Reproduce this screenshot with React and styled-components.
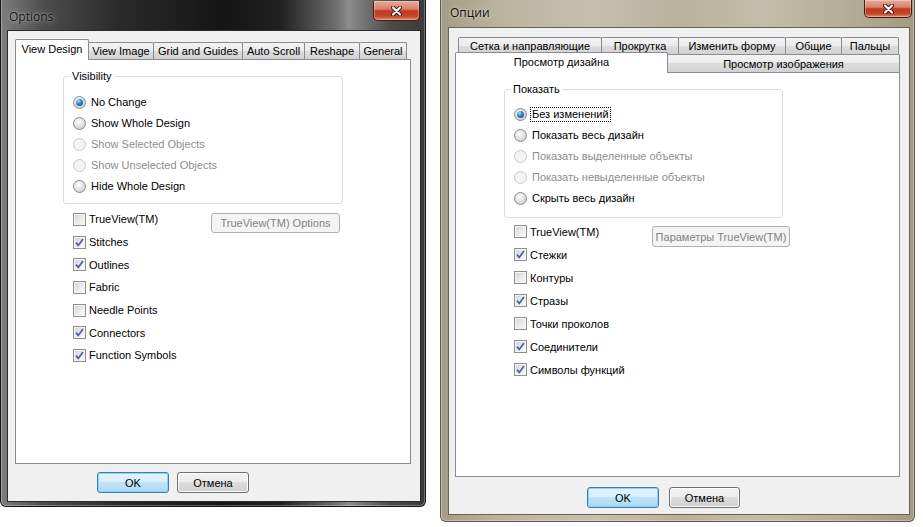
import styled, { createGlobalStyle } from "styled-components"

const GlobalStyle = createGlobalStyle`
  html, body { margin: 0; padding: 0; background: #ffffff; }
  body {
    font-family: "Liberation Sans", Arial, sans-serif;
    font-size: 11px;
    color: #000;
  }
`

const Screen = styled.div`
  display: flex;
  align-items: flex-start;
  gap: 14px;
  width: 923px;
  height: 527px;
  overflow: hidden;
  background: #fff;
`

const Frame = styled.div`
  box-sizing: border-box;
  width: ${p => p.$w}px;
  height: ${p => p.$h}px;
  display: flex;
  flex-direction: column;
  padding: 0 ${p => p.$pr}px ${p => p.$pb}px ${p => p.$pl}px;
  background: ${p => p.$bg};
  border: 1px solid ${p => p.$edge};
  border-top: none;
  border-radius: 0 0 6px 6px;
  box-shadow: inset 1px 0 0 rgba(255,255,255,.3), inset -1px 0 0 rgba(255,255,255,.3), inset 0 -1px 0 rgba(255,255,255,.3);
`

const TitleBar = styled.div`
  height: ${p => p.$h}px;
  flex-shrink: 0;
  display: flex;
  justify-content: space-between;
  align-items: flex-start;
`

const Title = styled.span`
  font-family: "Open Sans", "Liberation Sans", sans-serif;
  font-size: 12px;
  line-height: 14px;
  color: #111;
  margin: ${p => p.$top}px 0 0 2px;
  text-shadow: 0 0 6px rgba(255,255,255,.55), 0 0 2px rgba(255,255,255,.4);
`

const CloseButton = styled.div`
  box-sizing: border-box;
  width: ${p => p.$w}px;
  height: ${p => p.$h}px;
  margin: ${p => p.$top}px ${p => p.$right}px 0 0;
  border: 1px solid #4a1a12;
  border-top: none;
  border-radius: 0 0 5px 5px;
  background: linear-gradient(#e8ab9c 0%, #d8806a 42%, #c13b20 52%, #c4462a 80%, #dd8a6c 100%);
  box-shadow: inset 0 0 0 1px rgba(255,255,255,.3);
  display: flex;
  align-items: center;
  justify-content: center;
`

const Client = styled.div`
  flex: 1;
  min-height: 0;
  display: flex;
  flex-direction: column;
  background: #f0f0f0;
  border: 1px solid ${p => p.$edge};
  padding: ${p => p.$pad};
`

const TabRow = styled.div`
  display: flex;
  align-items: flex-end;
  height: ${p => p.$h}px;
  padding-left: ${p => p.$indent}px;
  flex-shrink: 0;
`

const Tab = styled.div`
  box-sizing: border-box;
  width: ${p => p.$w}px;
  height: ${p => p.$h}px;
  display: flex;
  align-items: center;
  justify-content: center;
  white-space: nowrap;
  border: 1px solid #898c95;
  border-bottom: none;
  border-radius: 2px 2px 0 0;
  background: linear-gradient(#f3f3f3 0%, #ebebeb 50%, #dddddd 50%, #d2d2d2 100%);
  & + & { margin-left: -1px; }
`

const ActiveTab = styled(Tab)`
  position: relative;
  z-index: 2;
  margin-bottom: -1px;
  background: #ffffff;
  padding-bottom: 2px;
`

const Panel = styled.div`
  flex: 1;
  min-height: 0;
  background: #fff;
  border: 1px solid #898c95;
  padding: ${p => p.$pt}px 0 0 ${p => p.$pl}px;
  display: flex;
  flex-direction: column;
  align-items: flex-start;
`

const GroupBox = styled.fieldset`
  box-sizing: border-box;
  width: ${p => p.$w}px;
  margin: 0;
  padding: ${p => p.$pt}px 0 ${p => p.$pb}px 9px;
  border: 1px solid #d5dfe5;
  border-radius: 3px;
  min-inline-size: auto;
`

const Legend = styled.legend`
  padding: 0 2px;
  margin-left: -3px;
  line-height: 13px;
`

const RadioRow = styled.div`
  display: flex;
  align-items: center;
  gap: 4px;
  height: 21px;
  color: ${p => (p.$disabled ? "#8d8d8d" : "#000")};
`

const RadioDot = styled.span`
  box-sizing: border-box;
  width: 13px;
  height: 13px;
  flex-shrink: 0;
  border-radius: 50%;
  border: 1px solid ${p => (p.$disabled ? "#c8c8c8" : "#8a8b8b")};
  background: ${p => (p.$disabled
    ? "#f4f4f4"
    : "radial-gradient(circle at 40% 35%, #ffffff 0%, #e4e4e4 45%, #c2c2c2 100%)")};
  display: flex;
  align-items: center;
  justify-content: center;
  &::after {
    content: "";
    display: ${p => (p.$checked ? "block" : "none")};
    width: 7px;
    height: 7px;
    border-radius: 50%;
    background: radial-gradient(circle at 35% 30%, #aee0fb 0%, #2f8bd0 40%, #0c3d6e 100%);
  }
`

const RadioText = styled.span`
  padding: 0 1px;
  line-height: 13px;
  outline: ${p => (p.$focus ? "1px dotted #000" : "none")};
`

const CheckList = styled.div`
  margin-top: ${p => p.$top}px;
  padding-left: 10px;
  display: flex;
  flex-direction: column;
`

const CheckLine = styled.div`
  display: flex;
  align-items: flex-start;
  height: ${p => p.$h}px;
`

const CheckRow = styled.div`
  display: flex;
  align-items: center;
  gap: 3px;
  height: ${p => p.$h}px;
  width: ${p => (p.$w ? `${p.$w}px` : "auto")};
`

const CheckBox = styled.span`
  box-sizing: border-box;
  width: 13px;
  height: 13px;
  flex-shrink: 0;
  border: 1px solid #8f8f8f;
  background: linear-gradient(135deg, #cfd1d4 0%, #eeeeee 60%, #fbfbfb 100%);
  box-shadow: inset 0 0 0 1px #f6f6f6;
  display: flex;
  align-items: center;
  justify-content: center;
`

const SideButton = styled.div`
  box-sizing: border-box;
  width: ${p => p.$w}px;
  height: ${p => p.$h}px;
  margin-top: ${p => p.$top}px;
  border: 1px solid #adb2b5;
  border-radius: 3px;
  background: #f4f4f4;
  color: #838383;
  display: flex;
  align-items: center;
  justify-content: center;
  white-space: nowrap;
`

const ButtonRow = styled.div`
  display: flex;
  gap: ${p => p.$gap}px;
  margin-top: ${p => p.$top}px;
  padding-left: ${p => p.$offset}px;
  flex-shrink: 0;
`

const DlgButton = styled.div`
  box-sizing: border-box;
  width: ${p => p.$w}px;
  height: 21px;
  border-radius: 3px;
  border: 1px solid ${p => (p.$default ? "#3c7fb1" : "#707070")};
  background: ${p => (p.$default
    ? "linear-gradient(#e5f4fc 0%, #d6eefb 50%, #bfe4f9 50%, #aad9f3 100%)"
    : "linear-gradient(#f2f2f2 0%, #ebebeb 50%, #dddddd 50%, #cfcfcf 100%)")};
  box-shadow: inset 0 0 0 1px ${p => (p.$default ? "#8fd2f2" : "#fcfcfc")};
  display: flex;
  align-items: center;
  justify-content: center;
`

const CloseGlyph = () => (
  <svg width="13" height="10" viewBox="0 0 13 10">
    <path d="M3 1.5 L10 8.5 M10 1.5 L3 8.5" stroke="#3b1610" strokeWidth="4" strokeLinecap="round" />
    <path d="M3 1.5 L10 8.5 M10 1.5 L3 8.5" stroke="#ffffff" strokeWidth="2.2" strokeLinecap="round" />
  </svg>
)

const Tick = () => (
  <svg width="9" height="9" viewBox="0 0 9 9">
    <path d="M1 4.6 L3.3 7.4 L8 1" fill="none" stroke="#4b5f98" strokeWidth="1.7" />
  </svg>
)

const dialogs = [
  {
    frame: {
      w: 426, h: 507, pl: 6, pr: 4, pb: 4, edge: "#151515",
      bg: "linear-gradient(90deg, #7d7d7d 0%, #4d4d4d 10%, #2a2a2a 28%, #151515 52%, #202020 66%, #6e6e6e 79%, #8c8c8c 82%, #4a4a4a 92%, #3a3a3a 100%)",
    },
    titleH: 30, titleTop: 10, title: "Options",
    close: { w: 47, h: 20, top: 1, right: 1 },
    clientPad: "8px 9px 8px 7px", clientEdge: "#2a2a2a",
    rows: [
      { h: 20, tabH: 17, indent: 0, tabs: [
        { label: "View Design", w: 74, active: true },
        { label: "View Image", w: 66 },
        { label: "Grid and Guides", w: 90 },
        { label: "Auto Scroll", w: 63 },
        { label: "Reshape", w: 56 },
        { label: "General", w: 48 },
      ] },
    ],
    panel: { pl: 47, pt: 10 },
    group: { w: 280, pt: 9, pb: 6, legend: "Visibility" },
    radios: [
      { label: "No Change", checked: true },
      { label: "Show Whole Design" },
      { label: "Show Selected Objects", disabled: true },
      { label: "Show Unselected Objects", disabled: true },
      { label: "Hide Whole Design" },
    ],
    focusFirst: false,
    checkTop: 4, checkH: 22.7,
    side: { label: "TrueView(TM) Options", w: 129, h: 20, top: 5 },
    checks: [
      { label: "TrueView(TM)" },
      { label: "Stitches", checked: true },
      { label: "Outlines", checked: true },
      { label: "Fabric" },
      { label: "Needle Points" },
      { label: "Connectors", checked: true },
      { label: "Function Symbols", checked: true },
    ],
    buttons: { top: 8, gap: 8, offset: 82, ok: 72, cancel: 72 },
  },
  {
    frame: {
      w: 475, h: 522, pl: 7, pr: 4, pb: 6, edge: "#5f5848",
      bg: "linear-gradient(90deg, #a39c86 0%, #b9b39e 12%, #c6c1ae 32%, #b8b29d 50%, #c3bea9 68%, #b3ad97 86%, #a19a84 100%)",
    },
    titleH: 27, titleTop: 6, title: "Опции",
    close: { w: 48, h: 18, top: 0, right: -2 },
    clientPad: "9px 9px 6px 6px", clientEdge: "#6a6352",
    rows: [
      { h: 17, tabH: 17, indent: 3, tabs: [
        { label: "Сетка и направляющие", w: 144 },
        { label: "Прокрутка", w: 78 },
        { label: "Изменить форму", w: 108 },
        { label: "Общие", w: 57 },
        { label: "Пальцы", w: 58 },
      ] },
      { h: 18, tabH: 18, indent: 0, tabs: [
        { label: "Просмотр дизайна", w: 213, active: true },
        { label: "Просмотр изображения", w: 233 },
      ] },
    ],
    panel: { pl: 48, pt: 10 },
    group: { w: 279, pt: 8, pb: 8, legend: "Показать" },
    radios: [
      { label: "Без изменений", checked: true },
      { label: "Показать весь дизайн" },
      { label: "Показать выделенные объекты", disabled: true },
      { label: "Показать невыделенные объекты", disabled: true },
      { label: "Скрыть весь дизайн" },
    ],
    focusFirst: true,
    checkTop: 2, checkH: 23,
    side: { label: "Параметры TrueView(TM)", w: 138, h: 21, top: 6 },
    checks: [
      { label: "TrueView(TM)" },
      { label: "Стежки", checked: true },
      { label: "Контуры" },
      { label: "Стразы", checked: true },
      { label: "Точки проколов" },
      { label: "Соединители", checked: true },
      { label: "Символы функций", checked: true },
    ],
    buttons: { top: 10, gap: 10, offset: 132, ok: 72, cancel: 71 },
  },
]

const Check = ({ item, h, w }) => (
  <CheckRow $h={h} $w={w}>
    <CheckBox>{item.checked && <Tick />}</CheckBox>
    <span>{item.label}</span>
  </CheckRow>
)

const Dialog = ({ d }) => {
  const [first, ...rest] = d.checks
  return (
    <Frame $w={d.frame.w} $h={d.frame.h} $pl={d.frame.pl} $pr={d.frame.pr} $pb={d.frame.pb}
      $bg={d.frame.bg} $edge={d.frame.edge}>
      <TitleBar $h={d.titleH}>
        <Title $top={d.titleTop}>{d.title}</Title>
        <CloseButton $w={d.close.w} $h={d.close.h} $top={d.close.top} $right={d.close.right}>
          <CloseGlyph />
        </CloseButton>
      </TitleBar>
      <Client $pad={d.clientPad} $edge={d.clientEdge}>
        {d.rows.map((row, i) => (
          <TabRow key={i} $h={row.h} $indent={row.indent}>
            {row.tabs.map(t => t.active
              ? <ActiveTab key={t.label} $w={t.w} $h={21}>{t.label}</ActiveTab>
              : <Tab key={t.label} $w={t.w} $h={row.tabH}>{t.label}</Tab>)}
          </TabRow>
        ))}
        <Panel $pl={d.panel.pl} $pt={d.panel.pt}>
          <GroupBox $w={d.group.w} $pt={d.group.pt} $pb={d.group.pb}>
            <Legend>{d.group.legend}</Legend>
            {d.radios.map((r, i) => (
              <RadioRow key={r.label} $disabled={r.disabled}>
                <RadioDot $checked={r.checked} $disabled={r.disabled} />
                <RadioText $focus={d.focusFirst && i === 0}>{r.label}</RadioText>
              </RadioRow>
            ))}
          </GroupBox>
          <CheckList $top={d.checkTop}>
            <CheckLine $h={d.checkH}>
              <Check item={first} h={d.checkH} w={138} />
              <SideButton $w={d.side.w} $h={d.side.h} $top={d.side.top}>{d.side.label}</SideButton>
            </CheckLine>
            {rest.map(c => <Check key={c.label} item={c} h={d.checkH} />)}
          </CheckList>
        </Panel>
        <ButtonRow $top={d.buttons.top} $gap={d.buttons.gap} $offset={d.buttons.offset}>
          <DlgButton $default $w={d.buttons.ok}>OK</DlgButton>
          <DlgButton $w={d.buttons.cancel}>Отмена</DlgButton>
        </ButtonRow>
      </Client>
    </Frame>
  )
}

const App = () => (
  <>
    <GlobalStyle />
    <Screen>
      {dialogs.map(d => <Dialog key={d.title} d={d} />)}
    </Screen>
  </>
)

export default App
